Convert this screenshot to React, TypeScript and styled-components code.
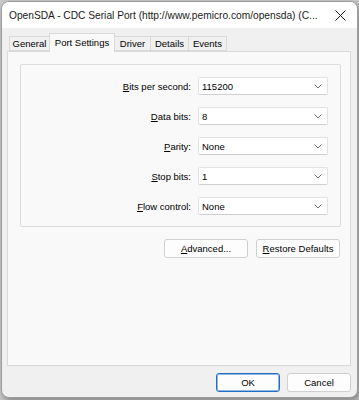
import React from "react";
import styled, { createGlobalStyle } from "styled-components";

const Global = createGlobalStyle`
  html, body { margin: 0; padding: 0; }
  body {
    width: 359px;
    height: 400px;
    overflow: hidden;
    background: #c9c9c9;
    font-family: "Liberation Sans", Arial, sans-serif;
  }
`;

const Window = styled.div`
  box-sizing: border-box;
  margin: 1px 0 0 1px;
  width: 357px;
  height: 397px;
  border: 1px solid #9c9c9c;
  border-radius: 8px;
  overflow: hidden;
  display: flex;
  flex-direction: column;
  background: #f0f0f0;
  box-shadow: 2px 3px 6px rgba(0, 0, 0, 0.35);
`;

const TitleBar = styled.div`
  height: 26px;
  flex: none;
  background: #ffffff;
  display: flex;
  align-items: center;
  padding: 0 0 0 7px;
  font-size: 10.2px;
  color: #1a1a1a;
`;

const TitleText = styled.div`
  flex: 1;
  white-space: nowrap;
  overflow: hidden;
`;

const CloseBox = styled.div`
  width: 30px;
  height: 26px;
  display: flex;
  align-items: center;
  justify-content: center;
  margin-right: 2px;
`;

const Body = styled.div`
  flex: 1;
  display: flex;
  flex-direction: column;
  padding: 5px 6px 0 5px;
  font-size: 9.5px;
  color: #000;
`;

const TabRow = styled.div`
  display: flex;
  align-items: flex-end;
  height: 18px;
  padding-left: 3px;
  position: relative;
  z-index: 1;
`;

const Tab = styled.div<{ $active?: boolean; $w: number }>`
  box-sizing: border-box;
  width: ${(p) => p.$w}px;
  height: ${(p) => (p.$active ? 19 : 15)}px;
  margin-bottom: ${(p) => (p.$active ? -1 : 0)}px;
  border: 1px solid #d9d9d9;
  border-bottom: ${(p) => (p.$active ? "none" : "1px solid #d9d9d9")};
  margin-left: -1px;
  background: ${(p) => (p.$active ? "#f9f9f9" : "#f0f0f0")};
  display: flex;
  align-items: ${(p) => (p.$active ? "flex-start" : "center")};
  padding-top: ${(p) => (p.$active ? 3 : 0)}px;
  justify-content: center;
  white-space: nowrap;
`;

const Panel = styled.div`
  box-sizing: border-box;
  height: 315px;
  flex: none;
  border: 1px solid #d9d9d9;
  background: #f9f9f9;
  padding: 12px 9px 0 12px;
  display: flex;
  flex-direction: column;
`;

const Group = styled.div`
  box-sizing: border-box;
  height: 163px;
  border: 1px solid #dcdcdc;
  border-radius: 2px;
  padding: 12px 12px 0 0;
  display: flex;
  flex-direction: column;
  gap: 12px;
`;

const Row = styled.div`
  display: grid;
  grid-template-columns: 1fr 130px;
  column-gap: 7px;
  align-items: center;
  height: 18px;
`;

const Label = styled.div`
  text-align: right;
  white-space: nowrap;
`;

const Key = styled.span`
  text-decoration: underline;
  text-underline-offset: 1px;
`;

const Combo = styled.div`
  box-sizing: border-box;
  height: 18px;
  background: #ffffff;
  border: 1px solid #e3e3e3;
  border-bottom-color: #cfcfcf;
  border-radius: 2px;
  display: flex;
  align-items: center;
  padding: 0 5px 0 3px;
`;

const ComboValue = styled.span`
  flex: 1;
`;

const ButtonRow = styled.div`
  display: flex;
  justify-content: flex-end;
  gap: 8px;
  padding: 12px 1px 0 0;
`;

const Button = styled.div<{ $w: number; $default?: boolean }>`
  box-sizing: border-box;
  width: ${(p) => p.$w}px;
  height: 19px;
  border-radius: 3px;
  background: #fdfdfd;
  border: 1px solid ${(p) => (p.$default ? "#1f6fc5" : "#d0d0d0")};
  box-shadow: ${(p) => (p.$default ? "inset 0 0 0 1px #8fb7e6" : "none")};
  display: flex;
  align-items: center;
  justify-content: center;
  white-space: nowrap;
`;

const Footer = styled.div`
  display: flex;
  justify-content: flex-end;
  gap: 7px;
  padding: 7px 0 0 0;
`;

const Chevron = () => (
  <svg width="8" height="5" viewBox="0 0 8 5">
    <path d="M0.5 0.5 L4 4 L7.5 0.5" fill="none" stroke="#606060" strokeWidth="0.9" />
  </svg>
);

const rows: { key: string; rest: string; value: string }[] = [
  { key: "B", rest: "its per second:", value: "115200" },
  { key: "D", rest: "ata bits:", value: "8" },
  { key: "P", rest: "arity:", value: "None" },
  { key: "S", rest: "top bits:", value: "1" },
  { key: "F", rest: "low control:", value: "None" },
];

const tabs = [
  { name: "General", w: 41 },
  { name: "Port Settings", w: 66, active: true },
  { name: "Driver", w: 37 },
  { name: "Details", w: 39 },
  { name: "Events", w: 39 },
];

export default function App() {
  return (
    <>
      <Global />
      <Window>
        <TitleBar>
          <TitleText>OpenSDA - CDC Serial Port (http://www.pemicro.com/opensda) (C...</TitleText>
          <CloseBox>
            <svg width="11" height="11" viewBox="0 0 11 11">
              <path d="M0.5 0.5 L10.5 10.5 M10.5 0.5 L0.5 10.5" stroke="#1a1a1a" strokeWidth="1" />
            </svg>
          </CloseBox>
        </TitleBar>
        <Body>
          <TabRow>
            {tabs.map((t) => (
              <Tab key={t.name} $w={t.w} $active={t.active}>
                {t.name}
              </Tab>
            ))}
          </TabRow>
          <Panel>
            <Group>
              {rows.map((r) => (
                <Row key={r.rest}>
                  <Label>
                    <Key>{r.key}</Key>
                    {r.rest}
                  </Label>
                  <Combo>
                    <ComboValue>{r.value}</ComboValue>
                    <Chevron />
                  </Combo>
                </Row>
              ))}
            </Group>
            <ButtonRow>
              <Button $w={84}>
                <Key>A</Key>dvanced...
              </Button>
              <Button $w={84}>
                <Key>R</Key>estore Defaults
              </Button>
            </ButtonRow>
          </Panel>
          <Footer>
            <Button $w={64} $default>
              OK
            </Button>
            <Button $w={64}>Cancel</Button>
          </Footer>
        </Body>
      </Window>
    </>
  );
}
